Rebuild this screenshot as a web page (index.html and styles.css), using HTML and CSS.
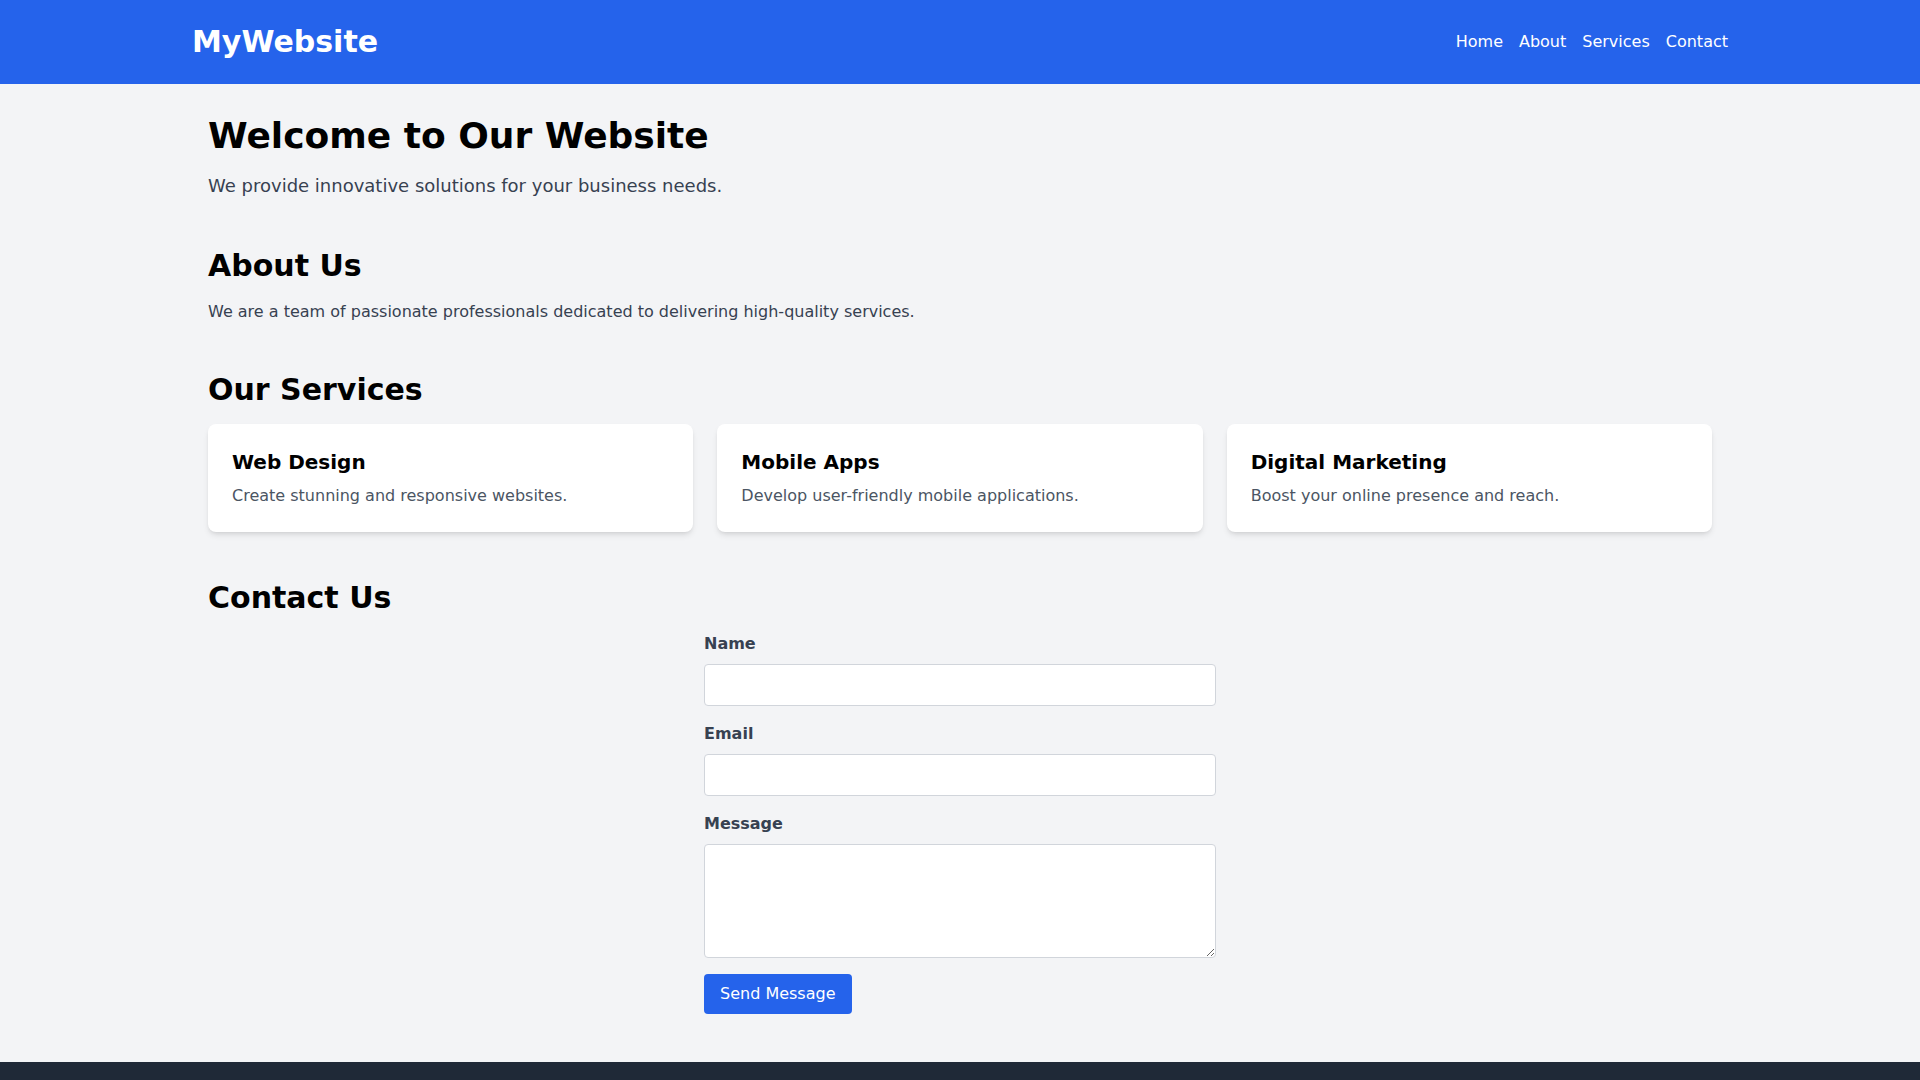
FILE: index.html
```html
<!DOCTYPE html>
<html lang="en">
<head>
<meta charset="utf-8">
<title>MyWebsite</title>
<link rel="stylesheet" href="styles.css">
</head>
<body>
<header class="site-header">
  <div class="container header-inner">
    <div class="logo">MyWebsite</div>
    <nav class="nav">
      <a href="#home">Home</a>
      <a href="#about">About</a>
      <a href="#services">Services</a>
      <a href="#contact">Contact</a>
    </nav>
  </div>
</header>
<main class="container main">
  <section class="section" id="home">
    <h1 class="hero-title">Welcome to Our Website</h1>
    <p class="hero-text">We provide innovative solutions for your business needs.</p>
  </section>
  <section class="section" id="about">
    <h2 class="section-title">About Us</h2>
    <p class="section-text">We are a team of passionate professionals dedicated to delivering high-quality services.</p>
  </section>
  <section class="section" id="services">
    <h2 class="section-title">Our Services</h2>
    <div class="cards">
      <div class="card">
        <h3 class="card-title">Web Design</h3>
        <p class="card-text">Create stunning and responsive websites.</p>
      </div>
      <div class="card">
        <h3 class="card-title">Mobile Apps</h3>
        <p class="card-text">Develop user-friendly mobile applications.</p>
      </div>
      <div class="card">
        <h3 class="card-title">Digital Marketing</h3>
        <p class="card-text">Boost your online presence and reach.</p>
      </div>
    </div>
  </section>
  <section class="section" id="contact">
    <h2 class="section-title">Contact Us</h2>
    <form class="contact-form">
      <div class="field">
        <label class="label" for="name">Name</label>
        <input class="input" type="text" id="name">
      </div>
      <div class="field">
        <label class="label" for="email">Email</label>
        <input class="input" type="email" id="email">
      </div>
      <div class="field">
        <label class="label" for="message">Message</label>
        <textarea class="input textarea" id="message" rows="4"></textarea>
      </div>
      <button class="button" type="submit">Send Message</button>
    </form>
  </section>
</main>
<footer class="site-footer">
  <div class="container footer-inner">
    <p>&copy; 2024 MyWebsite. All rights reserved.</p>
  </div>
</footer>
</body>
</html>
```
FILE: styles.css
```css
* { box-sizing: border-box; }
html, body { margin: 0; padding: 0; }
body {
  font-family: "DejaVu Sans", Verdana, sans-serif;
  font-size: 16px;
  line-height: 24px;
  background: #f3f4f6;
  color: #000;
}
h1, h2, h3, p { margin: 0; }
.container {
  width: 1536px;
  margin: 0 auto;
}
.site-header {
  background: #2563eb;
  color: #fff;
  padding: 24px 0;
}
.header-inner {
  display: flex;
  justify-content: space-between;
  align-items: center;
}
.logo {
  font-size: 30px;
  line-height: 36px;
  font-weight: bold;
}
.nav {
  display: flex;
  gap: 16px;
}
.nav a {
  color: #fff;
  text-decoration: none;
}
.main {
  padding: 32px 16px 0;
}
.section { margin-bottom: 48px; }
.hero-title {
  font-size: 36px;
  line-height: 40px;
  font-weight: bold;
  margin-bottom: 16px;
}
.hero-text {
  font-size: 18px;
  line-height: 28px;
  color: #374151;
}
.section-title {
  font-size: 30px;
  line-height: 36px;
  font-weight: bold;
  margin-bottom: 16px;
}
.section-text { color: #374151; }
.cards {
  display: grid;
  grid-template-columns: repeat(3, 1fr);
  gap: 24px;
}
.card {
  background: #fff;
  border-radius: 8px;
  padding: 24px;
  box-shadow: 0 4px 6px -1px rgba(0,0,0,0.1), 0 2px 4px -2px rgba(0,0,0,0.1);
}
.card-title {
  font-size: 20px;
  line-height: 28px;
  font-weight: bold;
  margin-bottom: 8px;
}
.card-text { color: #4b5563; }
.contact-form {
  width: 512px;
  margin: 0 auto;
}
.field { margin-bottom: 16px; }
.label {
  display: block;
  font-weight: bold;
  color: #374151;
  margin-bottom: 8px;
}
.input {
  display: block;
  width: 100%;
  height: 42px;
  padding: 8px 12px;
  border: 1px solid #d1d5db;
  border-radius: 4px;
  background: #fff;
  font-family: inherit;
  font-size: 16px;
  line-height: 24px;
  margin: 0;
}
.textarea {
  height: 114px;
  resize: vertical;
}
.button {
  display: block;
  background: #2563eb;
  color: #fff;
  border: none;
  border-radius: 4px;
  padding: 8px 16px;
  font-family: inherit;
  font-size: 16px;
  line-height: 24px;
  cursor: pointer;
}
.site-footer {
  background: #1f2937;
  color: #fff;
  padding: 24px 0;
}
.footer-inner { text-align: center; }
```
